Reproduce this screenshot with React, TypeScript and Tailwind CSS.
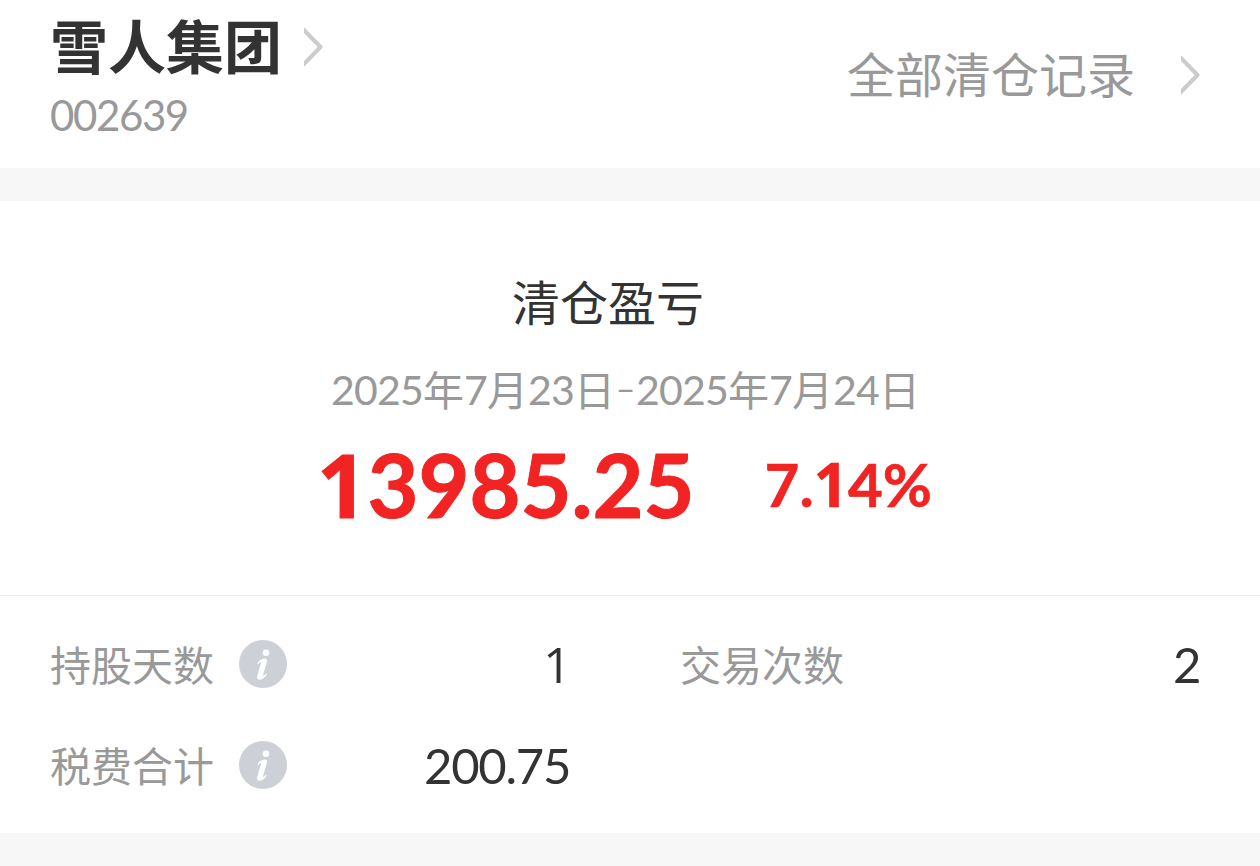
import React from 'react';

const cjk = "font-['Noto_Sans_CJK_SC',sans-serif]";
const latin = "font-['Lato',sans-serif]";

// Lato's "1" has a foot, so that digit is set in Open Sans
const Num: React.FC<{ value: string; className?: string }> = ({ value, className = '' }) => (
  <span className={`${latin} ${className}`}>
    {value.split('').map((ch, i) =>
      ch === '1' ? (
        <span key={i} className="font-['Open_Sans',sans-serif]">{ch}</span>
      ) : (
        ch
      )
    )}
  </span>
);

const Chevron: React.FC = () => (
  <svg width="19" height="40" viewBox="0 0 19 40" fill="none" className="shrink-0">
    <path d="M-1 2L16.5 20L-1 38" stroke="#cccccc" strokeWidth="4" strokeLinejoin="round" />
  </svg>
);

const InfoIcon: React.FC = () => (
  <svg width="48" height="48" viewBox="0 0 48 48" className="shrink-0">
    <circle cx="24" cy="24" r="24" fill="#cdd0d6" />
    <circle cx="27" cy="12.8" r="3.3" fill="#fff" />
    <path
      d="M18.4 23.4C20.2 20.4 22.8 18.8 25.4 18.6C27.6 18.4 28.5 19.7 27.9 21.8L24.2 34.6C23.9 35.9 24.4 36.1 25.2 35.4L27.2 33.4L28 34.1C26 37.7 23.3 39.8 20.7 39.8C18.5 39.8 17.5 38.4 18.1 36.2L21.8 23.4C22.2 22 21.7 21.8 20.9 22.4L19.1 24.1Z"
      fill="#fff"
    />
  </svg>
);

interface StatProps {
  label: string;
  value: string;
  info?: boolean;
}

const Stat: React.FC<StatProps> = ({ label, value, info }) => (
  <div className="flex h-[101px] items-center justify-between">
    <div className="flex items-center gap-[25px]">
      <span className="pb-[2px] text-[41px] leading-[48px] text-[#999999]">{label}</span>
      {info && <InfoIcon />}
    </div>
    <Num value={value} className="text-[49px] leading-[48px] tracking-[-1.3px] text-[#333333]" />
  </div>
);

const App: React.FC = () => {
  return (
    <div className={`flex h-[866px] w-[1260px] flex-col overflow-hidden bg-white ${cjk}`}>
      <header className="flex h-[168px] shrink-0 justify-between pl-[50px] pr-[60px]">
        <div className="pt-[14px]">
          <div className="flex items-center gap-[22px]">
            <h1 className="h-[66px] text-[58px] font-bold leading-[60px] text-[#333333]">雪人集团</h1>
            <Chevron />
          </div>
          <div className="leading-[70px]">
            <Num value="002639" className="text-[42px] tracking-[-1.4px] text-[#999999]" />
          </div>
        </div>
        <div className="flex h-[150px] items-center gap-[46px]">
          <span className="pb-[6px] text-[48px] leading-[60px] text-[#999999]">全部清仓记录</span>
          <Chevron />
        </div>
      </header>

      <div className="h-[33px] shrink-0 bg-[#f7f7f7]" />

      <section className="flex h-[395px] shrink-0 flex-col items-center border-b border-[#ebebeb] pt-[69px]">
        <h2 className="mr-[44px] text-[48px] leading-[60px] text-[#333333]">清仓盈亏</h2>
        <p className="mr-[9px] mt-[25px] flex items-center text-[41px] leading-[60px] text-[#999999]">
          <Num value="2025" className="pt-[5px] tracking-[-0.8px]" />年
          <Num value="7" className="pt-[5px] tracking-[-0.8px]" />月
          <Num value="23" className="pt-[5px] tracking-[-0.8px]" />日
          <span className={`w-[21px] text-center text-[34px] ${latin}`}>–</span>
          <Num value="2025" className="pt-[5px] tracking-[-0.8px]" />年
          <Num value="7" className="pt-[5px] tracking-[-0.8px]" />月
          <Num value="24" className="pt-[5px] tracking-[-0.8px]" />日
        </p>
        <div className="mr-[11px] mt-[14px] flex items-center gap-[70px] font-bold leading-[100px] text-[#f12323]">
          <Num value="13985.25" className="text-[88px] [-webkit-text-stroke:1px_#f12323]" />
          <Num value="7.14%" className="text-[60px] [-webkit-text-stroke:0.6px_#f12323]" />
        </div>
      </section>

      <section className="grid h-[237px] shrink-0 content-start grid-cols-[520px_520px] gap-x-[110px] pl-[50px] pt-[17px]">
        <Stat label="持股天数" value="1" info />
        <Stat label="交易次数" value="2" />
        <Stat label="税费合计" value="200.75" info />
      </section>

      <div className="flex-1 bg-[#f7f7f7]" />
    </div>
  );
};

export default App;
